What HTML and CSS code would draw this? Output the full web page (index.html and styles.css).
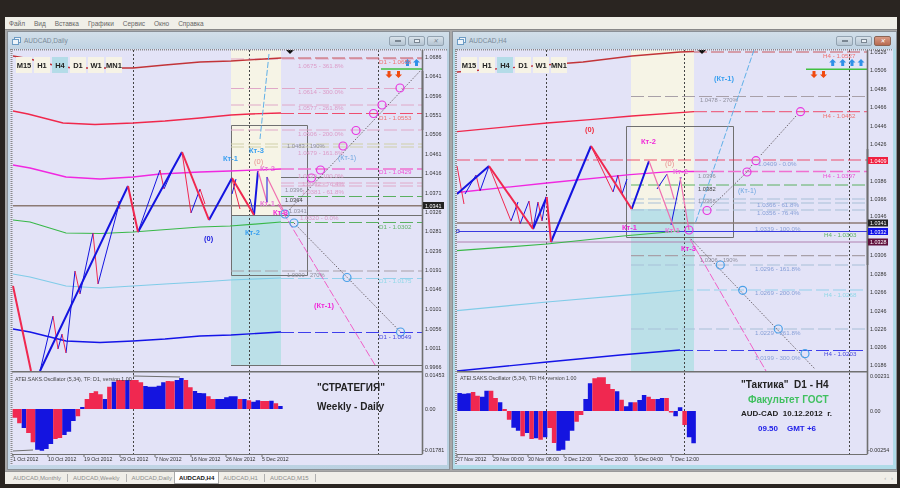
FILE: index.html
```html
<!DOCTYPE html>
<html lang="ru">
<head>
<meta charset="utf-8">
<title>AUDCAD</title>
<link rel="stylesheet" href="styles.css">
</head>
<body>
<div class="app">
  <nav class="menu">
    <span>Файл</span><span>Вид</span><span>Вставка</span><span>Графики</span><span>Сервис</span><span>Окно</span><span>Справка</span>
  </nav>
  <main class="mdi">
    <section class="win win-left">
      <header class="title">
        <svg class="ico" viewBox="0 0 9 8"><rect x="2.5" y=".5" width="6" height="5" class="ico-a"/><rect x=".5" y="2.5" width="6" height="5" class="ico-b"/></svg>
        <span class="title-text">AUDCAD,Daily</span>
        <div class="ctl"><i class="b"><u class="mn"></u></i><i class="b"><u class="mx"></u></i><i class="b"><u class="cl">✕</u></i></div>
      </header>
      <div class="chart">
        <div class="tf"><span>M15</span><span>H1</span><span class="on">H4</span><span>D1</span><span>W1</span><span>MN1</span></div>
        <svg class="ch" width="437" height="416" viewBox="10 50 437 416">
          <defs>
            <pattern id="dots" width="29" height="23" patternUnits="userSpaceOnUse">
              <path d="M2 3h1v1H2zM5 2h1v1H5zM8 3h1v1H8zM11 5h1v1h-1zM14 6h1v1h-1zM20 14h1v1h-1zM23 13h1v1h-1zM26 11h1v1h-1zM3 17h1v1H3zM6 19h1v1H6zM9 20h1v1H9zM16 10h1v1h-1z" fill="#fff"/>
            </pattern>
          </defs>
          <rect x="10" y="50" width="437" height="416" class="bg"/>
          <rect x="231" y="51" width="50" height="165" class="yel"/>
          <rect x="231" y="216" width="50" height="151" class="cya"/>
          <rect x="12" y="50" width="435" height="416" fill="url(#dots)"/>
          <path class="v" d="M133.500 51V372M249.500 51V372M378.500 51V372M133.500 374V455M249.500 374V455M378.500 374V455"/>

          <path class="hl" d="M231 366.500H422M231 216.500H422M281 178.500H422M231.500 126.500H307.500V276.500H231.500Z"/>
          <path class="hb" d="M13 206.700H422"/>
          <path class="d1 pk" d="M231 60H422M231 89.500H422M231 106H422M231 131H422M281 184H422M281 187H422"/>
          <path class="d1 kh" d="M231 145H422M231 148H422"/>
          <path class="d1 grd" d="M281 197.500H422"/>
          <path class="d1 gy" d="M231 272H422"/>

          <path class="r-dk" d="M13 57L30 60L53 66L72 69L133 69L165 66L200 63L231 62L281 59"/>
          <path class="d1 r-dk thin" d="M281 59H422"/>
          <path class="r" d="M13 112L28 115L63 124L95 125.500L133 124L165 122L200 119L231 116L250 115L281 114"/>
          <path class="d1 r thin" d="M281 114.500H422"/>
          <path class="mg" d="M13 166L30 169L66 178L100 180L133 178L160 175L200 173L230 172L281 170"/>
          <path class="d1 mg2" d="M281 170H422"/>
          <path class="gr" d="M13 221L30 223L66 234L100 234.500L133 233L200 228L230 227L281 223"/>
          <path class="d1 grd" d="M281 223.500H422"/>
          <path class="lb" d="M13 275L30 278L66 287L100 289L133 287L165 285L200 283L230 281L281 279"/>
          <path class="d1 lb thin" d="M281 279.500H422"/>
          <path class="bl" d="M13 330L30 333L66 342L100 343.500L133 342L165 340L200 337L231 336L281 333"/>
          <path class="d1 bl thin" d="M281 333.500H422"/>

          <path class="zb" d="M40 372L53 317M58 350L62 335M66 354L75 272M80 295L93 234M98 285L120 202M138 233L160 171M164 190L172 172M191 214L200 190M232 195L236 180M254 216L250 200"/>
          <path class="zr" d="M53 317L58 350M62 335L66 354M75 272L80 295M93 234L98 285M118 202L120 210M160 171L164 190M182 153L191 214M200 190L205 205M232 180L240 210"/>
          <path class="zB" d="M40 372L128 187M138 233L182 153M209 221L232 179M254 216L258 172"/>
          <path class="zR" d="M13 287L31 372M128 187L138 233M182 153L209 221M232 179L254 216"/>
          <path class="zp" d="M258 172L267 203M267 178L285 215"/>
          <path class="zb" d="M267 203L267 178"/>

          <path class="dt" d="M422 70L289 211M294 224L400.500 333"/>
          <path class="lbd" d="M269 55L260 140"/>
          <path class="pkd" d="M278 205L375 366"/>
          <path class="axblk" d="M422.500 72V131"/>
          <path class="gn2" d="M381 70H422"/>

          <g class="c-m"><circle cx="400" cy="89" r="4"/><circle cx="382" cy="106" r="4"/><circle cx="373.500" cy="114.500" r="4"/><circle cx="356" cy="131.500" r="4"/><circle cx="343" cy="147" r="4"/><circle cx="320.500" cy="171" r="4"/><circle cx="311.500" cy="179" r="4"/></g>
          <g class="c-b"><circle cx="285" cy="215" r="4"/><circle cx="294" cy="224" r="4"/><circle cx="347" cy="278.500" r="4"/><circle cx="400.500" cy="333" r="4"/></g>

          <path class="ar-u" d="M407.500 60l3.500 3.500h-2v3.500h-3v-3.500h-2zM416.500 60l3.500 3.500h-2v3.500h-3v-3.500h-2z"/>
          <path class="ar-d" d="M387.500 72h3v3.500h2l-3.500 3.500l-3.500-3.500h2zM397 72h3v3.500h2l-3.500 3.500l-3.500-3.500h2z"/>
          <path class="tri" d="M286 51h8l-4 4z"/>

          <g class="t fib">
            <text x="298" y="69">1.0675 - 361.8%</text><text x="298" y="95">1.0614 - 300.0%</text><text x="298" y="111">1.0577 - 261.8%</text><text x="298" y="137">1.0506 - 200.0%</text><text x="298" y="156">1.0479 - 161.8%</text><text x="298" y="179">1.0429 - 100.0%</text><text x="302" y="187">1.0392 - 76.4%</text><text x="302" y="195">1.0381 - 61.8%</text><text x="300" y="221">1.0320 - 0.0%</text>
          </g>
          <g class="t gyt">
            <text x="287" y="149">1.0483 - 190%</text><text x="285" y="193">1.0396</text><text x="289" y="214">1.0341</text><text x="287" y="278">1.0090 - 270%</text>
          </g>
          <text x="285" y="203" class="t dkt">1.0364</text>
          <text x="379" y="65" class="t tr">D1 - 1.0655</text><text x="379" y="120.500" class="t tr">D1 - 1.0553</text><text x="379" y="175" class="t tm">D1 - 1.0429</text><text x="379" y="230" class="t tg">D1 - 1.0302</text><text x="379" y="284" class="t tc">D1 - 1.0175</text><text x="379" y="339.500" class="t tb">D1 - 1.0049</text>

          <g class="k"><text x="223" y="161.500" class="kb">Кт-1</text><text x="249" y="153.500" class="kb">Кт-3</text><text x="245" y="236" class="kb">Кт-2</text><text x="204" y="242" class="kB">(0)</text><text x="314" y="309" class="kM">(Кт-1)</text><text x="273" y="216" class="kM">Кт-3</text><text x="254" y="165" class="kpr">(0)</text><text x="260" y="172" class="kp">Кт-2</text><text x="260" y="207" class="kp">Кт-1</text></g>
          <text x="338" y="161" class="t kl">(Кт-1)</text>

          <path class="frame" d="M11.500 50V466"/>
          <path class="frame" d="M10 50.500H447"/>
          <path class="ax" d="M422.500 51V455M12 372.800H422"/>
          <path class="ax thin2" d="M12 455.500H422.500"/>
          <path class="hl" d="M133 377L180 378M13 452L33 451"/>

          <path class="zb os-b" d="M23.900 410V429M37.400 410V450.700M41.900 410V451.700M46.400 410V450M50.900 410V445M64.400 410V436M68.900 410V432.700M73.400 410V422M82.400 410V408M104.900 410V400M113.900 410V382.700M127.400 410V381M145.400 410V387M149.900 410V387.700M154.400 410V387.700M158.900 410V386.700M163.400 410V383.300M176.900 410V381M181.400 410V379M194.900 410V392M199.400 410V394M203.900 410V394.300M217.400 410V400M221.900 410V400M226.400 410V398.300M230.900 410V397.300M235.400 410V397.300M244.400 410V400M253.400 410V402.700M257.900 410V401.300M271.400 410V401.700M280.400 410V407"/>
          <path class="zr os-r" d="M14.900 410V418.700M19.400 410V424.300M28.400 410V434M32.900 410V443.300M55.400 410V440M59.900 410V439M77.900 410V417.300M86.900 410V400M91.400 410V394M95.900 410V392.300M100.400 410V395.300M109.400 410V387.700M118.400 410V381M122.900 410V381M131.900 410V381M136.400 410V381M140.900 410V383.300M167.900 410V382M172.400 410V382.300M185.900 410V381M190.400 410V388.300M208.400 410V397.300M212.900 410V400M239.900 410V400M248.900 410V401.300M262.400 410V402M266.900 410V402M275.900 410V404.300"/>

          <text x="15" y="382" class="t osc">ATEI.SAKS.Oscillator (5,34), TF: D1, version 1.00</text>
          <text x="317" y="392" class="big">"СТРАТЕГИЯ"</text>
          <text x="317" y="410.500" class="big">Weekly - Daily</text>

          <g class="t pr">
            <text x="425" y="60">1.0686</text><text x="425" y="79">1.0641</text><text x="425" y="98.500">1.0596</text><text x="425" y="117.500">1.0551</text><text x="425" y="137">1.0506</text><text x="425" y="156.500">1.0461</text><text x="425" y="176">1.0416</text><text x="425" y="195.500">1.0371</text><text x="425" y="215">1.0326</text><text x="425" y="234">1.0281</text><text x="425" y="254">1.0236</text><text x="425" y="273">1.0191</text><text x="425" y="292">1.0146</text><text x="425" y="312">1.0101</text><text x="425" y="331.500">1.0056</text><text x="425" y="351">1.0011</text><text x="425" y="370">0.9966</text><text x="425" y="378">0.01453</text><text x="425" y="412">0.00</text><text x="423" y="453">-0.01781</text>
          </g>
          <rect x="423" y="203" width="21" height="7" class="tag-k"/><text x="425" y="208.700" class="t pw">1.0341</text>

          <g class="t tm2">
            <text x="13" y="462">1 Oct 2012</text><text x="48" y="462">10 Oct 2012</text><text x="84" y="462">19 Oct 2012</text><text x="120" y="462">29 Oct 2012</text><text x="155" y="462">7 Nov 2012</text><text x="191" y="462">16 Nov 2012</text><text x="226" y="462">26 Nov 2012</text><text x="262" y="462">5 Dec 2012</text>
          </g>
          <path class="hl" d="M13 455V458M48 455V458M84 455V458M120 455V458M155 455V458M191 455V458M226 455V458M262 455V458"/>
        </svg>
      </div>
    </section>

    <section class="win win-right">
      <header class="title">
        <svg class="ico" viewBox="0 0 9 8"><rect x="2.500" y=".5" width="6" height="5" class="ico-a"/><rect x=".5" y="2.500" width="6" height="5" class="ico-b"/></svg>
        <span class="title-text">AUDCAD,H4</span>
        <div class="ctl"><i class="b"><u class="mn"></u></i><i class="b"><u class="mx"></u></i><i class="b b-close"><u class="cl">✕</u></i></div>
      </header>
      <div class="chart">
        <div class="tf tf-r"><span>M15</span><span>H1</span><span class="on">H4</span><span>D1</span><span>W1</span><span>MN1</span></div>
        <svg class="ch" width="438" height="416" viewBox="455 50 438 416">
          <rect x="455" y="50" width="438" height="416" class="bg"/>
          <rect x="631" y="51" width="63" height="159" class="yel"/>
          <rect x="631" y="210" width="63" height="162" class="cya"/>
          <rect x="457" y="50" width="436" height="416" fill="url(#dots)"/>
          <path class="v" d="M546.500 51V372M684.500 51V372M849.500 51V372M546.500 374V455M684.500 374V455M849.500 374V455"/>

          <path class="hl" d="M626.500 127.500H733.500V238.500H626.500Z"/>
          <path class="hb" d="M457 224H867"/>
          <path class="hbl" d="M458 232.500H867"/>
          <rect x="456.500" y="230.800" width="2.500" height="2.500" class="hnd"/>
          <path class="hpk" d="M457 243H867"/>
          <path class="d1 r thin" d="M457 161H867"/>
          <path class="d1 gy" d="M631 97.500H867M631 256.700H867"/>
          <path class="d1 gyb" d="M631 200H867M631 204H867M631 211H867M631 266H867M631 330H867"/>
          <path class="d1 grd" d="M631 186H867"/>

          <path class="r-dk" d="M457 73L570 64L583 63L632 57L680 53L694 52.500"/>
          <path class="d1 r-dk thin" d="M694 53H867"/>
          <path class="r" d="M457 132.700L547 124L590 120.700L632 117L694 112.700"/>
          <path class="d1 r thin" d="M694 112.700H867"/>
          <path class="mg" d="M457 193.500L547 184L630 175.700L670 172.700L694 172.500"/>
          <path class="d1 mg2" d="M694 172.500H867"/>
          <path class="gr" d="M457 251.700L547 245L623 237L680 232"/>
          <path class="lb" d="M457 311.700L547 303L632 295.700L680 291.500"/>
          <path class="d1 lb thin" d="M680 291H867"/>
          <path class="bl" d="M457 372L547 363L623 355.700L680 351"/>
          <path class="d1 bl thin" d="M680 351.500H867"/>

          <path class="zb" d="M465 195L476 176M480 192L489 167M511 222L518 203M520 225L529 202M533 230L538 203M542 222L546 198M613 193L618 176M622 195L627 180M657 190L667 175M671 226L681 178"/>
          <path class="zr" d="M457 167L464 205M476 176L480 192M489 167L511 222M515 203L520 225M529 202L533 230M538 203L542 222M591 147L613 193M618 176L622 195"/>
          <path class="zB" d="M457 195L489 167M533 230L546.700 198M551 243L591 147M631.700 210L649 162"/>
          <path class="zR" d="M489 167L533 230M546.700 198L551 243M591 147L631.700 210"/>
          <path class="zp" d="M649 162L675 232M680 178L689 231M667 175L674 200"/>
          <path class="axblk" d="M867.500 150V266"/>

          <path class="dt" d="M796 117L760 157M752 166L747 173L711 208M689 238L815 370"/>
          <path class="lbd" d="M754 51L695 225"/>
          <path class="pkd" d="M690 240L766 372"/>
          <path class="gn2" d="M806 70.300H867"/>

          <g class="c-m"><circle cx="800.500" cy="112.700" r="4"/><circle cx="756" cy="161.700" r="4"/><circle cx="747" cy="173" r="4"/><circle cx="707" cy="211.500" r="4"/><circle cx="689" cy="231" r="4"/></g>
          <g class="c-b"><circle cx="720.300" cy="266" r="4"/><circle cx="742.700" cy="291.300" r="4"/><circle cx="778.300" cy="330" r="4"/><circle cx="805" cy="354.700" r="4"/></g>

          <path class="ar-u" d="M832.700 60l3.500 3.500h-2v3.500h-3v-3.500h-2zM842.700 60l3.500 3.500h-2v3.500h-3v-3.500h-2zM852 60l3.500 3.500h-2v3.500h-3v-3.500h-2zM861 60l3.500 3.500h-2v3.500h-3v-3.500h-2z"/>
          <path class="ar-d" d="M812.500 72h3v3.500h2l-3.500 3.500l-3.500-3.500h2zM822 72h3v3.500h2l-3.500 3.500l-3.500-3.500h2z"/>
          <path class="tri" d="M698 51h8l-4 4z"/>

          <g class="t fibb">
            <text x="758" y="167">1.0409 - 0.0%</text><text x="757" y="208">1.0366 - 61.8%</text><text x="757" y="216">1.0356 - 76.4%</text><text x="755" y="232">1.0339 - 100.0%</text><text x="755" y="271.500">1.0296 - 161.8%</text><text x="755" y="296">1.0269 - 200.0%</text><text x="755" y="336">1.0229 - 261.8%</text><text x="755" y="361">1.0199 - 300.0%</text>
          </g>
          <g class="t gyt">
            <text x="700" y="103">1.0478 - 270%</text><text x="698" y="179">1.0396</text><text x="698" y="204">1.0368</text><text x="700" y="262.500">1.0306 - 190%</text>
          </g>
          <text x="698" y="192" class="t dkt">1.0382</text>
          <text x="823" y="59" class="t tr">H4 - 1.0527</text><text x="823" y="119" class="t tr">H4 - 1.0462</text><text x="823" y="178.500" class="t tm">H4 - 1.0397</text><text x="824" y="238" class="t tg">H4 - 1.0303</text><text x="824" y="297.500" class="t tc">H4 - 1.0268</text><text x="824" y="357" class="t tb">H4 - 1.0203</text>

          <g class="k"><text x="585" y="133" class="kR">(0)</text><text x="641" y="145" class="kM">Кт-2</text><text x="622" y="230.500" class="kM">Кт-1</text><text x="681" y="251.500" class="kM">Кт-3</text><text x="714" y="81.500" class="kb">(Кт-1)</text><text x="665" y="167" class="kpr">(0)</text><text x="673" y="174.500" class="kp">Кт-2</text><text x="665" y="234" class="kp">Кт-1</text></g>
          <text x="738" y="194" class="t kl">(Кт-1)</text>

          <path class="frame" d="M456 50V466"/>
          <path class="frame" d="M455 50.500H893"/>
          <path class="ax" d="M867.500 51V455M457 372.800H867"/>
          <path class="ax thin2" d="M457 455.500H867.500"/>

          <path class="zb os-b" d="M459.600 412V394M464.100 412V394.700M468.600 412V394.300M482.100 412V397.700M486.600 412V391.700M500.100 412V403.300M513.600 412V428.700M518.100 412V431.700M527.100 412V434M536.100 412V439.300M545.100 412V438.300M558.600 412V451.700M563.100 412V450.700M567.600 412V441.700M572.100 412V431.700M585.600 412V400M590.100 412V384.300M617.100 412V392.300M626.100 412V407.300M630.600 412V403.300M639.600 412V401M644.100 412V396M657.600 412V400M662.100 412V399M675.600 412V417.300M680.100 412V408.300M689.100 412V438.300M693.600 412V444.300"/>
          <path class="zr os-r" d="M473.100 412V393M477.600 412V396.700M491.100 412V391.700M495.600 412V399M504.600 412V410M509.100 412V420.700M522.600 412V437.300M531.600 412V440M540.600 412V440.700M549.600 412V429M554.100 412V444M576.600 412V422.700M581.100 412V416M594.600 412V379.300M599.100 412V378.300M603.600 412V378.300M608.100 412V385M612.600 412V390M621.600 412V400.700M635.100 412V403.300M648.600 412V397.700M653.100 412V400M666.600 412V399M671.100 412V413.500M684.600 412V426"/>

          <text x="460" y="381" class="t osc">ATEI.SAKS.Oscillator (5,34), TFi H4, version 1.00</text>
          <text x="741" y="388.500" class="big">"Тактика"  D1 - H4</text>
          <text x="748" y="403.500" class="big grn">Факультет ГОСТ</text>
          <text x="741" y="417" class="mid">AUD-CAD  10.12.2012  г.</text>
          <text x="758" y="431.500" class="mid blu">09.50    GMT +6</text>

          <g class="t pr">
            <text x="870" y="55">1.0526</text><text x="870" y="73">1.0506</text><text x="870" y="92">1.0486</text><text x="870" y="110">1.0466</text><text x="870" y="129">1.0446</text><text x="870" y="147">1.0426</text><text x="870" y="184">1.0386</text><text x="870" y="202">1.0366</text><text x="870" y="219">1.0346</text><text x="870" y="258">1.0306</text><text x="870" y="277">1.0286</text><text x="870" y="295">1.0266</text><text x="870" y="314">1.0246</text><text x="870" y="332">1.0226</text><text x="870" y="350">1.0206</text><text x="870" y="368">1.0186</text><text x="870" y="379">0.00231</text><text x="870" y="414">0.00</text><text x="868" y="453">-0.00254</text>
          </g>
          <rect x="868" y="158" width="20" height="7" class="tag-r"/><text x="870" y="163.500" class="t pw">1.0409</text>
          <rect x="868" y="220.500" width="20" height="7" class="tag-k"/><text x="870" y="226" class="t pw">1.0341</text>
          <rect x="868" y="229" width="20" height="7" class="tag-b"/><text x="870" y="234.500" class="t pw">1.0332</text>
          <rect x="868" y="239.500" width="20" height="7" class="tag-d"/><text x="870" y="245" class="t pw">1.0328</text>

          <g class="t tm2">
            <text x="457" y="462">27 Nov 2012</text><text x="493" y="462">29 Nov 00:00</text><text x="528" y="462">30 Nov 08:00</text><text x="564" y="462">3 Dec 12:00</text><text x="600" y="462">4 Dec 20:00</text><text x="635" y="462">6 Dec 04:00</text><text x="671" y="462">7 Dec 12:00</text>
          </g>
          <path class="hl" d="M457 455V458M493 455V458M528 455V458M564 455V458M600 455V458M635 455V458M671 455V458"/>
        </svg>
      </div>
    </section>
  </main>
  <footer class="tabs">
    <span class="tab sep">AUDCAD,Monthly</span><span class="tab sep">AUDCAD,Weekly</span><span class="tab tab-plain">AUDCAD,Daily</span><span class="tab on">AUDCAD,H4</span><span class="tab sep">AUDCAD,H1</span><span class="tab sep">AUDCAD,M15</span>
    <span class="nav">‹ ›</span>
  </footer>
</div>
</body>
</html>
```
FILE: styles.css
```css
* { box-sizing: border-box; }
html, body { margin: 0; height: 100%; }
body {
  background: #2a2521;
  padding: 17px 3px 4px 5px;
  font-family: "Liberation Sans", Arial, sans-serif;
  overflow: hidden;
}
.app {
  height: 467px;
  width: 892px;
  display: flex;
  flex-direction: column;
  background: #9a9a9a;
}
.menu {
  height: 13px;
  background: #f0efe8;
  display: flex;
  align-items: center;
  gap: 9px;
  padding-left: 4px;
  font-size: 6.500px;
  color: #666;
  border-bottom: 1px solid #888;
  flex: none;
}
.mdi {
  flex: 1;
  min-height: 0;
  display: flex;
  gap: 2px;
  padding: 1px 0 1px 2px;
  background: #a8a8a8;
}
.win {
  display: flex;
  flex-direction: column;
  background: linear-gradient(90deg, #c4d6e6, #b8d0e0);
  border: 1px solid #8a9096;
  min-width: 0;
}
.win-left { width: 443px; padding: 0 2px; }
.win-right { width: 445px; padding: 0 2px; background: #b0dbe8; }
.title {
  height: 17px;
  flex: none;
  display: flex;
  align-items: center;
  gap: 3px;
  padding-left: 2px;
  margin: 0 -2px;
  padding-right: 5px;
  background: linear-gradient(180deg, #d2dfe9, #c0d3e3);
}
.ico { width: 9px; height: 8px; margin-left: 2px; flex: none; }
.ico-a, .ico-b { fill: #eef4fa; stroke: #6d9cc4; stroke-width: 1; }
.title-text { font-size: 6.500px; color: #7a8a98; flex: 1; }
.ctl { display: flex; gap: 2px; }
.b {
  width: 17px;
  height: 10px;
  display: flex;
  align-items: center;
  justify-content: center;
  background: linear-gradient(180deg, #d8e2ea, #b4c4d2);
  border: 1px solid #93a3b1;
  border-radius: 2px;
}
.b-close { background: linear-gradient(180deg, #d89a84, #b86a50); border-color: #8a6454; }
.b u { text-decoration: none; display: block; }
.mn { width: 6px; height: 2px; background: #eef2f6; border: 1px solid #7a8692; }
.mx { width: 6px; height: 4px; border: 1px solid #7a8692; background: #e8eef4; }
.cl { font-size: 6px; line-height: 8px; color: #7a8692; }
.b-close .cl { color: #fff; }
.chart { position: relative; flex: none; height: 416px; }
.tf {
  position: absolute;
  top: 8px;
  left: 6px;
  display: flex;
  gap: 2px;
  z-index: 2;
  filter: blur(.3px);
}
.tf span {
  width: 16px;
  height: 16px;
  background: #f6f3e6;
  font-size: 7.500px;
  font-weight: 700;
  color: #222;
  display: flex;
  align-items: center;
  justify-content: center;
}
.tf .on { background: #b4dce8; }
.ch { display: block; filter: blur(.35px); }

.bg { fill: #e3e3f7; }
.yel { fill: #f6f4e6; }
.cya { fill: #bbe0e8; }
.ch path { fill: none; }
.v { stroke: #444; stroke-width: 1; stroke-dasharray: 2 2; }
.hl { stroke: #707070; stroke-width: 1; }
.hb { stroke: #8c7a74; stroke-width: 1.400; }
.hbl { stroke: #3a3ae0; stroke-width: 1; }
.hpk { stroke: #b080b0; stroke-width: 1; }
.hnd { fill: #e3e3f7; stroke: #2020c0; stroke-width: .8; }
.d1 { stroke-dasharray: 13 4; stroke-width: 1; }
.pk { stroke: #e0a8c8; }
.kh { stroke: #d0cfa8; stroke-width: 1.200; }
.grd { stroke: #5ab060; }
.gy { stroke: #a8a0a8; stroke-width: 1.200; }
.gyb { stroke: #a8c0d8; stroke-width: 1.200; }
.r-dk { stroke: #c23438; stroke-width: 1.300; }
.r { stroke: #f0284c; stroke-width: 1.300; }
.mg { stroke: #f028e0; stroke-width: 1.300; }
.mg2 { stroke: #f070d0; stroke-width: 1.600; }
.gr { stroke: #38b848; stroke-width: 1.200; }
.lb { stroke: #80cce8; stroke-width: 1.200; }
.bl { stroke: #1414e8; stroke-width: 1.400; }
.d1.thin { stroke-width: 1; stroke-opacity: .8; }
.zb { stroke: #1414e0; stroke-width: 1; }
.zr { stroke: #f02850; stroke-width: 1; }
.zB { stroke: #1414e0; stroke-width: 2; }
.zR { stroke: #f02850; stroke-width: 2; }
.zp { stroke: #f070b0; stroke-width: 1.200; }
.dt { stroke: #706870; stroke-width: 1; stroke-dasharray: 1.500 1.500; }
.lbd { stroke: #60b0e8; stroke-width: 1; stroke-dasharray: 6 2; }
.pkd { stroke: #f060c8; stroke-width: 1; stroke-dasharray: 8 2; }
.axblk { stroke: #222; stroke-width: 1.500; }
.gn2 { stroke: #40c040; stroke-width: 1.500; }
.c-m circle { fill: none; stroke: #e838e0; stroke-width: 1.200; }
.c-b circle { fill: none; stroke: #4aa0e8; stroke-width: 1.200; }
.ch .ar-u { fill: #2f90e8; }
.ch .ar-d { fill: #f04a10; }
.ch .tri { fill: #111; }
.frame { stroke: #8a8a8a; stroke-width: 2; stroke-dasharray: 1 1; }
.ax { stroke: #707070; stroke-width: 1.600; }
.ax.thin2 { stroke-width: 1; }
.os-b, .os-r { stroke-width: 4.500; }

.t { font-size: 6.200px; }
.fib { fill: #dc9cc8; }
.fibb { fill: #88a0d8; }
.gyt { fill: #8e8e9c; font-size: 5.800px; }
.dkt { fill: #444; font-size: 5.800px; }
.tr { fill: #f07070; }
.tm { fill: #ee50d8; }
.tg { fill: #60b468; }
.tc { fill: #90d8e8; }
.tb { fill: #4848e0; }
.k text { font-size: 7.500px; font-weight: 700; }
.kb { fill: #3aa0f0; }
.kB { fill: #2020e0; }
.kM { fill: #f028d8; }
.kR { fill: #f03040; }
.kp { fill: #e878d8; }
.k .kpr { fill: #e89090; font-weight: 400; }
.kl { fill: #70a8e0; font-size: 7px; }
.osc { font-size: 5.300px; fill: #444; }
.big { font-size: 10px; font-weight: 700; fill: #222; white-space: pre; }
.mid { font-size: 8px; font-weight: 700; fill: #222; white-space: pre; }
.grn { fill: #40c060; }
.blu { fill: #2020e8; }
.pr { font-size: 5.400px; fill: #333; }
.pw { font-size: 5.400px; fill: #fff; }
.tm2 { font-size: 5.200px; fill: #333; }
.tag-k { fill: #222; }
.tag-r { fill: #f02040; }
.tag-b { fill: #1010e8; }
.tag-d { fill: #60103c; }

.tabs {
  height: 12px;
  margin-top: 1px;
  flex: none;
  display: flex;
  align-items: stretch;
  background: #f0eee8;
  padding-left: 6px;
  font-size: 6px;
  color: #8a8a8a;
}
.tab {
  padding: 0 4px 0 2px;
  display: flex;
  align-items: center;
}
.tab-plain { padding-right: 2px; }
.tab.sep { border-right: 1px solid #b0b0b0; margin: 2px 3px 2px 0; padding-right: 6px; }
.tab.on {
  background: #fff;
  color: #111;
  font-weight: 700;
  padding: 0 4px;
  margin: 0 2px 0 0;
  border: 1px solid #aaa;
  border-top: 0;
}
.nav { margin-left: auto; padding-right: 4px; color: #aaa; align-self: center; word-spacing: 3px; }
```
